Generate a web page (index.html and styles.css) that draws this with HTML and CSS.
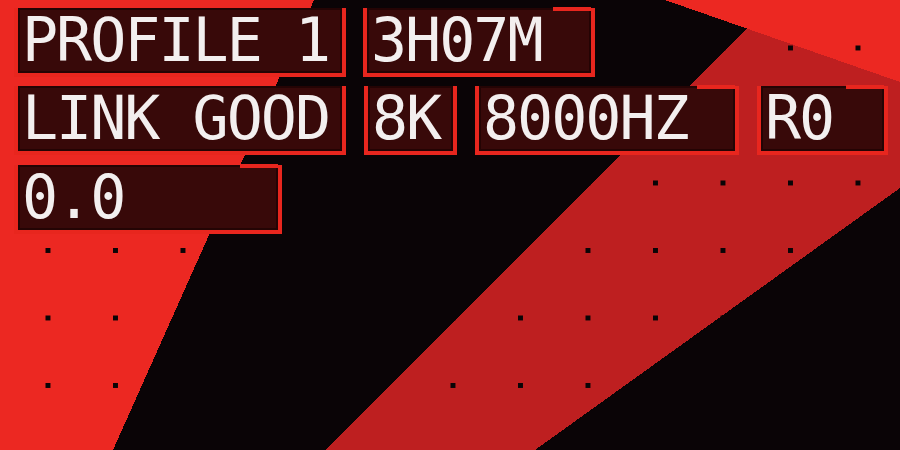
FILE: index.html
```html
<!DOCTYPE html>
<html lang="en">
<head>
<meta charset="utf-8">
<title>HUD</title>
<link rel="stylesheet" href="styles.css">
</head>
<body>
<div class="screen">
  <svg class="bg" viewBox="0 0 900 450" width="900" height="450" shape-rendering="crispEdges" aria-hidden="true">
    <defs>
      <pattern id="dots" x="45.5" y="45.5" width="67.5" height="67.5" patternUnits="userSpaceOnUse">
        <rect x="0" y="0" width="5" height="5" fill="#0a0406"/>
      </pattern>
    </defs>
    <rect x="0" y="0" width="900" height="450" fill="#0a0406"/>
    <polygon points="0,0 314,0 113,450 0,450" fill="#ec2822"/>
    <polygon points="775,0 900,0 900,188 535,450 325,450" fill="#be1f20"/>
    <polygon points="665,0 900,0 900,82" fill="#ec2822"/>
    <rect x="0" y="0" width="900" height="450" fill="url(#dots)"/>
  </svg>
  <div class="hud">
    <div class="row">
      <div class="box w-main">PROFILE 1</div>
      <div class="box w-time seg">3H07M</div>
    </div>
    <div class="row row-b">
      <div class="box w-main">LINK GOOD</div>
      <div class="box w-k">8K</div>
      <div class="box w-hz seg">8000HZ</div>
      <div class="box w-r seg">R0</div>
    </div>
    <div class="row row-c">
      <div class="box w-val seg">0.0</div>
    </div>
  </div>
</div>
</body>
</html>
```
FILE: styles.css
```css
html, body {
  margin: 0;
  padding: 0;
  background: #0a0406;
}

.screen {
  position: relative;
  width: 900px;
  height: 450px;
  overflow: hidden;
}

.bg {
  position: absolute;
  left: 0;
  top: 0;
  display: block;
}

.hud {
  position: relative;
  display: flex;
  flex-direction: column;
  gap: 9px;
  padding: 8px 0 0 14px;
}

.row {
  display: flex;
  column-gap: 17px;
}

.row-b {
  column-gap: 18px;
}

.row-c {
  margin-top: 1px;
}

.box {
  position: relative;
  box-sizing: content-box;
  height: 65px;
  background: #380909;
  box-shadow: inset 0 0 0 2px #240404;
  border-left: 4px solid #e8261e;
  border-right: 4px solid #e8261e;
  border-bottom: 4px solid #e8261e;
  color: #f3efef;
  font-family: "DejaVu Sans Mono", monospace;
  font-size: 60px;
  line-height: 65px;
  letter-spacing: -2px;
  padding-left: 4px;
  white-space: nowrap;
}

.seg::after {
  content: "";
  position: absolute;
  right: 0;
  top: -1px;
  width: 38px;
  height: 4px;
  background: #e8261e;
}

.w-main { width: 320px; }
.w-time { width: 220px; }
.w-k { width: 81px; }
.w-hz { width: 252px; }
.w-r { width: 119px; }
.w-val { width: 256px; }
```
